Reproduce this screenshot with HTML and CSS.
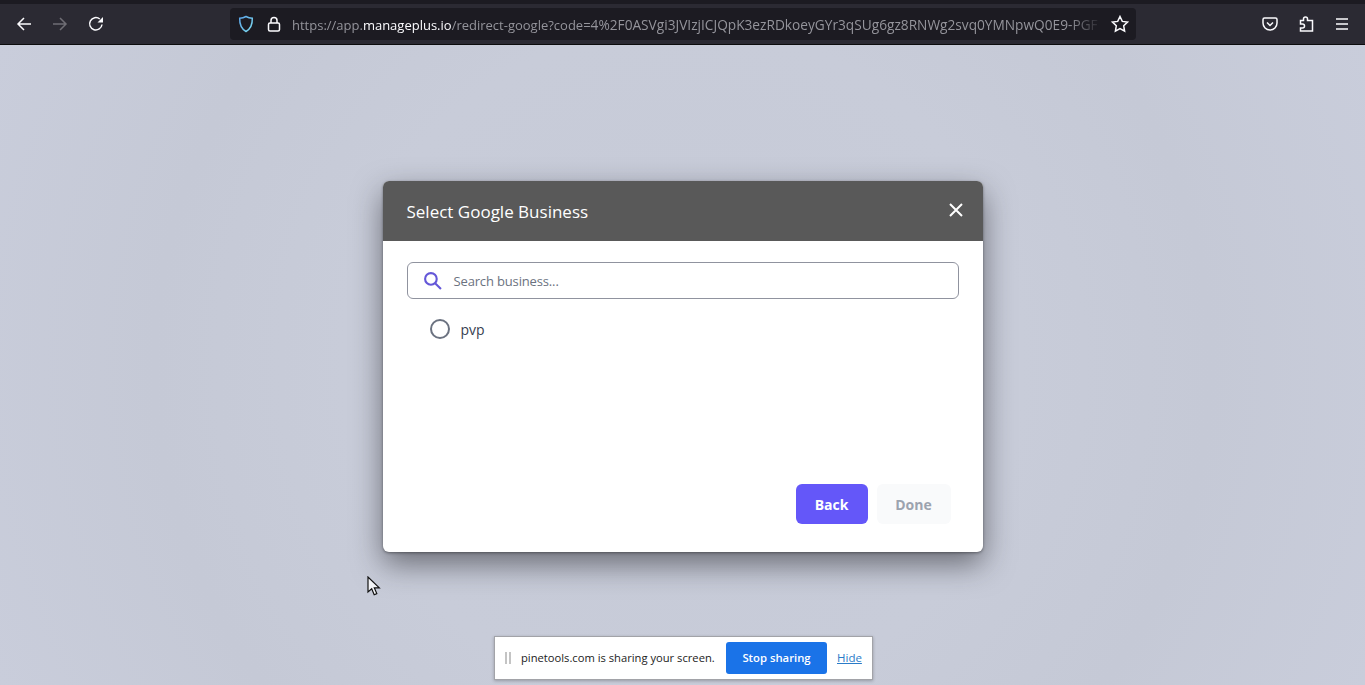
FILE: index.html
```html
<!DOCTYPE html>
<html>
<head>
    <title>Select Google Business</title>
    <meta name="viewport" content="width=device-width, initial-scale=1">
    <link rel="stylesheet" href="styles.css">
</head>
<body>

<!-- Browser toolbar -->
<div class="tabstrip"></div>
<div class="toolbar">
    <div class="nav">
        <svg class="icon" viewBox="0 0 16 16"><path d="M15 8H2M8 2 2 8l6 6"/></svg>
        <svg class="icon dim" viewBox="0 0 16 16"><path d="M1 8h13M8 2l6 6-6 6"/></svg>
        <svg class="icon" viewBox="0 0 16 16"><path d="M14 8.500A6.200 6.200 0 1 1 11.800 3"/><path class="solid" d="M15 1v5.500H9.500z"/></svg>
    </div>
    <div class="urlbar">
        <svg class="shield" viewBox="0 0 16 18"><defs><linearGradient id="sh" x1="0" y1="0" x2="1" y2="1"><stop offset="0" stop-color="#5aa4e8"/><stop offset="1" stop-color="#7fdcf0"/></linearGradient></defs><path d="M8 1.500c2 1.200 4 1.700 6.300 1.800C14.500 9.500 12.500 14 8 16.500 3.500 14 1.500 9.500 1.700 3.300 4 3.200 6 2.700 8 1.500z"/></svg>
        <svg class="lock" viewBox="0 0 14 16"><rect x="1.500" y="7" width="11" height="8" rx="1.500"/><path d="M4 7V4.500a3 3 0 0 1 6 0V7"/></svg>
        <div class="url"><span>https://app.</span><b>manageplus.io</b><span>/redirect-google?code=</span><span class="rest">4%2F0ASVgi3JVIzjICJQpK3ezRDkoeyGYr3qSUg6gz8RNWg2svq0YMNpwQ0E9-PGF</span></div>
        <svg class="star" viewBox="0 0 18 18"><path d="M9 1.500l2.300 4.900 5.200.7-3.800 3.700.9 5.300L9 13.500l-4.600 2.600.9-5.300-3.800-3.700 5.200-.7z"/></svg>
    </div>
    <div class="tools">
        <svg class="icon" viewBox="0 0 16 16"><path d="M2.500 2h11A1.500 1.500 0 0 1 15 3.500V7a7 7 0 0 1-14 0V3.500A1.500 1.500 0 0 1 2.500 2z"/><path d="M5 6.500l3 3 3-3"/></svg>
        <svg class="icon" viewBox="0 0 16 16"><path d="M5.500 4.500V3a2 2 0 0 1 4 0v1.500h5V15h-12v-3h2a2 2 0 0 0 0-4h-2V4.500z"/></svg>
        <svg class="icon" viewBox="0 0 16 16"><path d="M2 3h12M2 8h12M2 13h12"/></svg>
    </div>
</div>

<!-- Page Content -->
<div class="page">
    <div class="modal">
        <div class="modal-head">
            <h2>Select Google Business</h2>
            <svg class="close" viewBox="0 0 14 14"><path d="M1 1l12 12M13 1 1 13"/></svg>
        </div>
        <div class="modal-body">
            <div class="search">
                <svg viewBox="0 0 18 18"><circle cx="7.500" cy="7.500" r="5.500"/><path d="M11.500 11.500 17 17"/></svg>
                <span>Search business...</span>
            </div>
            <div class="option">
                <span class="radio"></span>
                <span>pvp</span>
            </div>
        </div>
        <div class="modal-foot">
            <button class="btn back">Back</button>
            <button class="btn done">Done</button>
        </div>
    </div>
</div>

<!-- Mouse pointer -->
<svg class="pointer" viewBox="0 0 14 21"><path d="M1 1v15l3.700-3.300 2.500 6 2.600-1.100-2.500-5.800h5z"/></svg>

<!-- Screen share notice -->
<div class="sharebar">
    <span class="grip"></span>
    <span class="share-text">pinetools.com is sharing your screen.</span>
    <button class="stop">Stop sharing</button>
    <a href="#">Hide</a>
</div>

</body>
</html>
```

FILE: styles.css
```css
html, body {
    margin: 0;
    height: 100%;
    overflow: hidden;
}

body {
    display: flex;
    flex-direction: column;
    background-color: #c8ccd9;
    font-family: "Open Sans", "Noto Sans", sans-serif;
}

/* Toolbar */
.tabstrip {
    height: 4px;
    background-color: #1c1b22;
}

.toolbar {
    height: 40px;
    display: flex;
    align-items: center;
    background-color: #2b2a33;
    border-bottom: 1px solid #0c0c0d;
    box-sizing: content-box;
}

.icon {
    width: 16px;
    height: 16px;
    fill: none;
    stroke: #fbfbfe;
    stroke-width: 1.5;
}

.icon.dim {
    stroke: #6f6e75;
}

.icon .solid {
    fill: #fbfbfe;
    stroke: none;
}

.nav {
    width: 230px;
    display: flex;
    gap: 20px;
    padding-left: 16px;
    box-sizing: border-box;
}

.urlbar {
    width: 906px;
    height: 32px;
    display: flex;
    align-items: center;
    background-color: #1c1b22;
    border-radius: 4px;
    padding-left: 8px;
    box-sizing: border-box;
}

.shield {
    width: 16px;
    height: 18px;
    fill: none;
    stroke: url(#sh);
    stroke-width: 1.5;
}

.lock {
    width: 14px;
    height: 16px;
    margin-left: 13px;
    fill: none;
    stroke: #fbfbfe;
    stroke-width: 1.5;
}

.url {
    width: 810px;
    margin-left: 11px;
    white-space: nowrap;
    font-size: 13px;
    color: #94949b;
    -webkit-mask-image: linear-gradient(to right, black 96%, transparent);
    mask-image: linear-gradient(to right, black 96%, transparent);
}

.url b {
    font-weight: 400;
    color: #fbfbfe;
}

.url .rest {
    font-size: 13.7px;
}

.star {
    width: 18px;
    height: 18px;
    margin-left: 9px;
    fill: none;
    stroke: #fbfbfe;
    stroke-width: 1.5;
}

.tools {
    flex: 1;
    display: flex;
    justify-content: flex-end;
    gap: 20px;
    padding-right: 15px;
}

/* Page */
.page {
    flex: 1;
    display: flex;
    justify-content: center;
    align-items: flex-start;
    padding-top: 136px;
    background: radial-gradient(circle at 50% 50%, #c6cad7 0%, #c8ccd9 45%, #c5c9d6 70%, #c9cddb 100%);
}

/* Modal */
.modal {
    width: 600px;
    height: 371px;
    display: flex;
    flex-direction: column;
    background-color: white;
    border-radius: 6px;
    overflow: hidden;
    box-shadow: 0 12px 30px rgba(30, 30, 35, 0.55), 0 1px 3px rgba(0, 0, 0, 0.4);
}

.modal-head {
    height: 60px;
    flex: none;
    display: flex;
    align-items: center;
    justify-content: space-between;
    background-color: #595959;
    padding: 0 21px 0 24px;
}

.modal-head h2 {
    margin: 0;
    font-size: 17px;
    font-weight: 400;
    color: white;
}

.close {
    width: 14px;
    height: 14px;
    margin-right: -1px;
    margin-bottom: 3px;
    fill: none;
    stroke: white;
    stroke-width: 2;
}

.modal-body {
    flex: 1;
    padding: 21px 24px 0;
}

.search {
    height: 37px;
    display: flex;
    align-items: center;
    gap: 12px;
    border: 1px solid #90939f;
    border-radius: 6px;
    padding-left: 15px;
    box-sizing: border-box;
    font-size: 13px;
    letter-spacing: -0.15px;
    color: #6b7280;
}

.search svg {
    width: 19px;
    height: 19px;
    fill: none;
    stroke: #6457d8;
    stroke-width: 2;
}

.option {
    display: flex;
    align-items: center;
    gap: 11px;
    margin-top: 20px;
    padding-left: 23px;
    font-size: 14px;
    color: #374151;
}

.radio {
    width: 20px;
    height: 20px;
    border: 2px solid #6b7280;
    border-radius: 50%;
    box-sizing: border-box;
}

.modal-foot {
    display: flex;
    justify-content: flex-end;
    gap: 9px;
    padding: 0 32px 28px 0;
}

.btn {
    width: 72px;
    height: 40px;
    border: 0;
    border-radius: 6px;
    font-family: inherit;
    font-size: 14px;
    font-weight: 700;
}

.back {
    background-color: #6457f9;
    color: white;
}

.done {
    width: 74px;
    background-color: #f9fafb;
    color: #9ca3af;
}

/* Pointer */
.pointer {
    position: absolute;
    left: 367px;
    top: 576px;
    width: 14px;
    height: 21px;
    fill: #f4f5f8;
    stroke: #111;
    stroke-width: 1.2;
}

/* Share bar */
.sharebar {
    position: absolute;
    left: 494px;
    top: 636px;
    width: 379px;
    height: 44px;
    display: flex;
    align-items: center;
    background-color: white;
    border: 1px solid #a2a3a8;
    box-sizing: border-box;
    box-shadow: 0 1px 3px rgba(0, 0, 0, 0.25);
    font-size: 11.2px;
    color: #222;
}

.grip {
    flex: none;
    width: 2px;
    height: 12px;
    margin-left: 10px;
    border-left: 2px solid #c4c4c4;
    border-right: 2px solid #c4c4c4;
}

.share-text {
    flex: none;
    width: 195px;
    margin-left: 10px;
    padding-bottom: 2px;
    white-space: nowrap;
}

.stop {
    flex: none;
    width: 101px;
    height: 32px;
    margin-left: 10px;
    padding-bottom: 2px;
    border: 0;
    border-radius: 3px;
    background-color: #1a73e8;
    color: white;
    font-family: inherit;
    font-size: 11.3px;
    font-weight: 600;
}

.sharebar a {
    margin-left: 10px;
    padding-bottom: 2px;
    font-size: 11.5px;
    color: #2a7bc8;
}
```
